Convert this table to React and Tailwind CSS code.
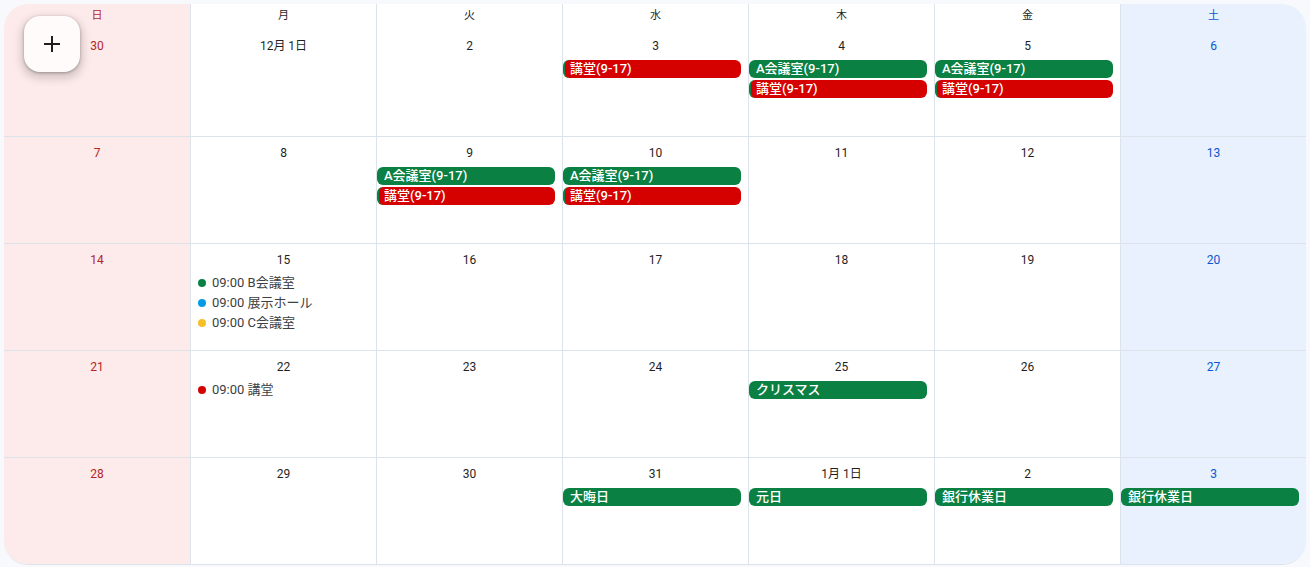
import React from "react";

function Chip({ label, color }) {
  if (color === "red") {
    return (
      <div className="mr-[7px] h-[18px] rounded-[6px] border-l-2 border-[#0b8043] bg-[#d50000] pl-[5px] text-[13px] font-medium leading-[18px] text-white truncate">
        {label}
      </div>
    );
  }
  return (
    <div className="mr-[7px] h-[18px] rounded-[6px] bg-[#0b8043] pl-[7px] text-[13px] font-medium leading-[18px] text-white truncate">
      {label}
    </div>
  );
}

function Dot({ color, label }) {
  return (
    <div className="flex h-[20px] items-center pl-[7px] text-[13px] text-[#3c4043]">
      <span className={`mr-[6px] inline-block h-[8px] w-[8px] rounded-full ${color}`} />
      <span>{label}</span>
    </div>
  );
}

const heads = ["日", "月", "火", "水", "木", "金", "土"];

const weeks = [
  [
    { n: "30" },
    { n: "12月 1日" },
    { n: "2" },
    { n: "3", chips: [["講堂(9-17)", "red"]] },
    { n: "4", chips: [["A会議室(9-17)", "green"], ["講堂(9-17)", "red"]] },
    { n: "5", chips: [["A会議室(9-17)", "green"], ["講堂(9-17)", "red"]] },
    { n: "6" },
  ],
  [
    { n: "7" },
    { n: "8" },
    { n: "9", chips: [["A会議室(9-17)", "green"], ["講堂(9-17)", "red"]] },
    { n: "10", chips: [["A会議室(9-17)", "green"], ["講堂(9-17)", "red"]] },
    { n: "11" },
    { n: "12" },
    { n: "13" },
  ],
  [
    { n: "14" },
    {
      n: "15",
      dots: [
        ["bg-[#0b8043]", "09:00 B会議室"],
        ["bg-[#039be5]", "09:00 展示ホール"],
        ["bg-[#f6bf26]", "09:00 C会議室"],
      ],
    },
    { n: "16" },
    { n: "17" },
    { n: "18" },
    { n: "19" },
    { n: "20" },
  ],
  [
    { n: "21" },
    { n: "22", dots: [["bg-[#d50000]", "09:00 講堂"]] },
    { n: "23" },
    { n: "24" },
    { n: "25", chips: [["クリスマス", "green"]] },
    { n: "26" },
    { n: "27" },
  ],
  [
    { n: "28" },
    { n: "29" },
    { n: "30" },
    { n: "31", chips: [["大晦日", "green"]] },
    { n: "1月 1日", chips: [["元日", "green"]] },
    { n: "2", chips: [["銀行休業日", "green"]] },
    { n: "3", chips: [["銀行休業日", "green"]] },
  ],
];

function colBg(i) {
  if (i === 0) return "bg-[#fdeaea]";
  if (i === 6) return "bg-[#e8f1fd]";
  return "bg-white";
}
function colText(i) {
  if (i === 0) return "text-[#b3261e]";
  if (i === 6) return "text-[#0b57d0]";
  return "text-[#1f1f1f]";
}

export default function App() {
  return (
    <div
      className="h-[567px] w-[1310px] bg-[#f7f9fc] pl-[4px] pr-[4px] pt-[4px]"
      style={{ fontFamily: "Roboto, 'Noto Sans CJK JP', sans-serif" }}
    >
      <div className="relative h-[561px] w-[1302px] overflow-hidden rounded-[24px] border-b border-[#dde3ea] bg-white">
        <div className="grid grid-cols-7">
          {heads.map((h, i) => (
            <div
              key={h}
              className={`flex h-[25px] items-center justify-center text-[11px] ${colBg(i)} ${colText(i)} ${i > 0 ? "border-l border-[#dde3ea]" : ""}`}
            >
              {h}
            </div>
          ))}
        </div>
        {weeks.map((w, wi) => (
          <div
            key={wi}
            className={`grid h-[107px] grid-cols-7 ${wi > 0 ? "border-t border-[#dde3ea]" : ""}`}
          >
            {w.map((d, i) => (
              <div
                key={i}
                className={`flex flex-col ${colBg(i)} ${i > 0 ? "border-l border-[#dde3ea]" : ""}`}
              >
                <div
                  className={`${wi === 0 ? "mt-[9px]" : "mt-[8px]"} h-[16px] text-center text-[12px] leading-[16px] ${colText(i)}`}
                >
                  {d.n}
                </div>
                {d.chips && (
                  <div className="mt-[6px] flex flex-col gap-[2px]">
                    {d.chips.map(([l, c], k) => (
                      <Chip key={k} label={l} color={c} />
                    ))}
                  </div>
                )}
                {d.dots && (
                  <div className="mt-[5px] flex flex-col">
                    {d.dots.map(([c, l], k) => (
                      <Dot key={k} color={c} label={l} />
                    ))}
                  </div>
                )}
              </div>
            ))}
          </div>
        ))}
        <button className="absolute left-[20px] top-[12px] flex h-[56px] w-[56px] items-center justify-center rounded-[16px] bg-[#fffbfb] shadow-[0_1px_3px_rgba(0,0,0,0.3),0_4px_8px_3px_rgba(0,0,0,0.15)]">
          <svg width="24" height="24" viewBox="0 0 24 24" fill="none">
            <path d="M12 4v16M4 12h16" stroke="#1f1f1f" strokeWidth="2" />
          </svg>
        </button>
      </div>
    </div>
  );
}
